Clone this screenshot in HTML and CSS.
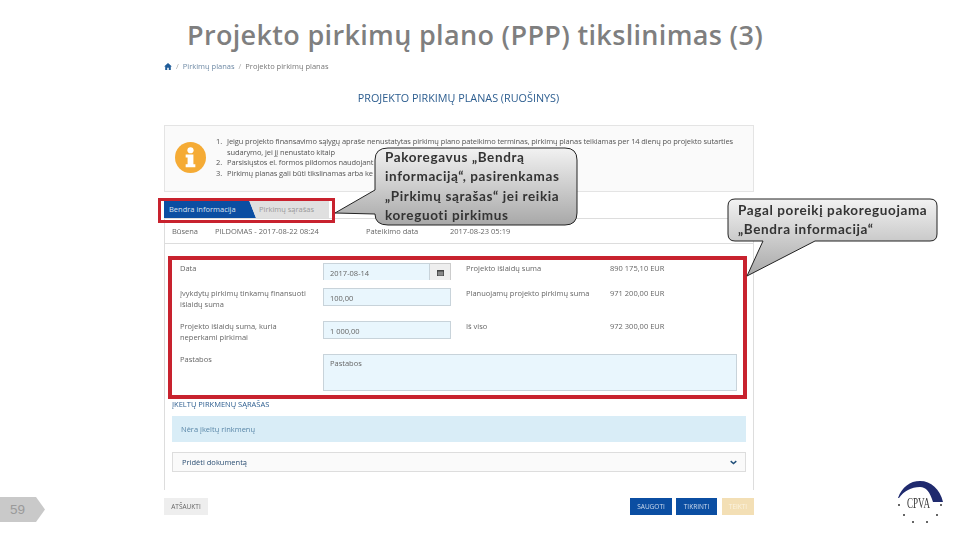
FILE: index.html
```html
<!DOCTYPE html>
<html lang="lt">
<head>
    <meta charset="UTF-8">
    <title>Projekto pirkimų plano tikslinimas</title>
    <link rel="stylesheet" href="styles.css">
</head>
<body>
<div class="slide">
    <h1 class="title">Projekto pirkimų plano (PPP) tikslinimas (3)</h1>

    <div class="shot">
        <div class="crumbs">
            <svg class="home" viewBox="0 0 10 9"><path d="M5 0 L10 4.6 H8.6 V9 H6 V6 H4 V9 H1.4 V4.6 H0 Z"/></svg>
            <span class="sep">/</span><span>Pirkimų planas</span>
            <span class="sep">/</span><span class="muted">Projekto pirkimų planas</span>
        </div>
        <h2 class="heading">PROJEKTO PIRKIMŲ PLANAS (RUOŠINYS)</h2>

        <div class="alert">
            <svg class="alert-icon" viewBox="0 0 32 32">
                <circle cx="16" cy="16" r="16" fill="#f5ab35"/>
                <circle cx="16" cy="8.5" r="3.2" fill="#fff"/>
                <path d="M11 13 H19 V23 H21 V26 H11 V23 H13 V16 H11 Z" fill="#fff"/>
            </svg>
            <ol class="alert-list">
                <li>Jeigu projekto finansavimo sąlygų apraše nenustatytas pirkimų plano pateikimo terminas, pirkimų planas teikiamas per 14 dienų po projekto sutarties sudarymo, jei jį nenustato kitaip</li>
                <li>Parsisiųstos el. formos pildomos naudojant</li>
                <li>Pirkimų planas gali būti tikslinamas arba ke</li>
            </ol>
        </div>

        <div class="tabs">
            <div class="tab tab-active">Bendra informacija</div>
            <div class="tab tab-idle">Pirkimų sąrašas</div>
        </div>

        <div class="panel">
            <div class="status">
                <span class="status-a">Būsena</span>
                <span class="status-b">PILDOMAS - 2017-08-22 08:24</span>
                <span class="status-c">Pateikimo data</span>
                <span>2017-08-23 05:19</span>
            </div>

            <div class="form">
                <div class="form-row row-first">
                    <div class="label">Data</div>
                    <div class="date">
                        <div class="input input-open">2017-08-14</div>
                        <div class="date-btn">
                            <svg class="cal" viewBox="0 0 8 8"><path d="M0 1 H8 V8 H0 Z M1 3 V7 H7 V3 Z"/><path d="M1 3 H7 V7 H1 Z" opacity=".6"/></svg>
                        </div>
                    </div>
                    <div class="label label-right">Projekto išlaidų suma</div>
                    <div class="value">890 175,10 EUR</div>
                </div>
                <div class="form-row">
                    <div class="label">Įvykdytų pirkimų tinkamų finansuoti<br>išlaidų suma</div>
                    <div class="input">100,00</div>
                    <div class="label label-right">Planuojamų projekto pirkimų suma</div>
                    <div class="value">971 200,00 EUR</div>
                </div>
                <div class="form-row">
                    <div class="label">Projekto išlaidų suma, kuria<br>neperkami pirkimai</div>
                    <div class="input">1 000,00</div>
                    <div class="label label-right">Iš viso</div>
                    <div class="value">972 300,00 EUR</div>
                </div>
                <div class="form-row row-notes">
                    <div class="label">Pastabos</div>
                    <div class="input notes">Pastabos</div>
                </div>
            </div>

            <div class="files">
                <h3 class="files-title">ĮKELTŲ PIRKMENŲ SĄRAŠAS</h3>
                <div class="files-info">Nėra įkeltų rinkmenų</div>
                <div class="files-add">
                    <span>Pridėti dokumentą</span>
                    <svg class="chev" viewBox="0 0 10 7"><path d="M1 1.5 L5 5 L9 1.5" fill="none" stroke="#1f4e79" stroke-width="2"/></svg>
                </div>
            </div>
        </div>

        <div class="actions">
            <div class="btn btn-back">ATŠAUKTI</div>
            <div class="actions-right">
                <div class="btn btn-main btn-save">SAUGOTI</div>
                <div class="btn btn-main btn-check">TIKRINTI</div>
                <div class="btn btn-off">TEIKTI</div>
            </div>
        </div>
    </div>

    <div class="mark mark-tabs"></div>
    <div class="mark mark-form"></div>

    <svg class="bubble-art" viewBox="0 0 960 540">
        <defs>
            <linearGradient id="bubbleFill" x1="0" y1="0" x2="0" y2="1">
                <stop offset="0" stop-color="#f2f2f2"/>
                <stop offset="1" stop-color="#a8a8a8"/>
            </linearGradient>
        </defs>
        <path fill="url(#bubbleFill)" stroke="#222" d="M388 148 H565 Q577 148 577 160 V213 Q577 225 565 225 H388 Q375 225 375 214 L335 213 L375 190 V160 Q375 148 388 148 Z"/>
        <path fill="url(#bubbleFill)" stroke="#222" d="M735 199 H930 Q937 199 937 206 V234 Q937 241 930 241 H815 L747 276 L763 241 H735 Q728 241 728 234 V206 Q728 199 735 199 Z"/>
    </svg>

    <div class="bubble bubble-one">Pakoregavus „Bendrą informaciją“, pasirenkamas „Pirkimų sąrašas“ jei reikia koreguoti pirkimus</div>
    <div class="bubble bubble-two">Pagal poreikį pakoreguojama „Bendra informacija“</div>

    <div class="page-tag">59</div>

    <svg class="logo" viewBox="0 0 48 46">
        <path d="M1 18 C5 7 13 1 23 1 C34 1 43 9 46 22 L36 22 C33 12 29 7 23 7 C14 7 7 11 2 18 Z" fill="#1f2a6e"/>
        <text x="10" y="28" textLength="23" lengthAdjust="spacingAndGlyphs" class="logo-text">CPVA</text>
        <circle cx="2" cy="25" r="1" fill="#333"/>
        <circle cx="44" cy="25" r="1" fill="#333"/>
        <circle cx="7" cy="35" r="1" fill="#333"/>
        <circle cx="40" cy="35" r="1" fill="#333"/>
        <circle cx="16" cy="42" r="1" fill="#333"/>
        <circle cx="30" cy="42" r="1" fill="#333"/>
    </svg>
</div>
</body>
</html>
```

FILE: styles.css
```css
* {
    box-sizing: border-box;
}
body {
    margin: 0;
    background-color: white;
    font-family: "Open Sans", sans-serif;
}
.slide {
    position: relative;
    width: 960px;
    height: 540px;
    overflow: hidden;
    background-color: white;
}
.title {
    margin: 0;
    height: 59px;
    padding-top: 16px;
    padding-left: 187px;
    font-size: 27px;
    line-height: 38px;
    font-weight: 600;
    color: #7f7f7f;
    letter-spacing: 0.33px;
    white-space: nowrap;
}

/* the pasted screenshot of the web form */
.shot {
    width: 590px;
    margin-left: 164px;
    font-size: 7.5px;
    color: #666;
    filter: blur(0.4px);
}
.crumbs {
    display: flex;
    align-items: center;
    gap: 4px;
    height: 14px;
    color: #6f8aa5;
}
.crumbs .muted {
    color: #777;
}
.crumbs .sep {
    color: #aaa;
}
.home {
    width: 8px;
    height: 7px;
    fill: #1f5c99;
}
.heading {
    margin: 18px 0 20px 0;
    height: 14px;
    font-size: 10.8px;
    line-height: 14px;
    font-weight: 400;
    text-align: center;
    color: #2c5d8f;
    padding-right: 1px;
}
.alert {
    display: flex;
    height: 67px;
    padding: 10px 10px 0 10px;
    background-color: #fafafa;
    border: 1px solid #e4e4e4;
}
.alert-icon {
    width: 31px;
    height: 31px;
    margin-top: 6px;
    flex-shrink: 0;
}
.alert-list {
    margin: 0;
    padding: 0 0 0 18px;
    line-height: 10.5px;
    letter-spacing: -0.11px;
    color: #555;
}
.alert-list li {
    padding-left: 3px;
}
.tabs {
    display: flex;
    margin-top: 8px;
    height: 18px;
}
.tab {
    line-height: 18px;
    white-space: nowrap;
}
.tab-active {
    width: 92px;
    padding-left: 5px;
    background-color: #0b4ea2;
    color: #d8e4f2;
    clip-path: polygon(0 0, 85px 0, 92px 100%, 0 100%);
}
.tab-idle {
    width: 80px;
    margin-left: -7px;
    padding-left: 10px;
    background-color: #e0e0e0;
    color: #999;
    clip-path: polygon(0 0, 100% 0, 100% 100%, 7px 100%);
}
.panel {
    height: 272px;
    border-left: 1px solid #ddd;
    border-right: 1px solid #ddd;
    border-top: 1px solid #ddd;
}
.status {
    display: flex;
    align-items: center;
    height: 25px;
    padding-left: 7px;
    border-bottom: 1px solid #ddd;
}
.status-a {
    width: 43px;
}
.status-b {
    width: 151px;
}
.status-c {
    width: 84px;
}
.form {
    padding-top: 19px;
}
.form-row {
    display: flex;
    height: 33px;
    padding-left: 15px;
    padding-bottom: 15px;
}
.row-first {
    height: 25px;
    padding-bottom: 8px;
}
.row-notes {
    height: 37px;
    padding-bottom: 0;
}
.label {
    width: 143px;
    line-height: 11px;
    color: #666;
}
.label-right {
    width: 144px;
    margin-left: 15px;
}
.value {
    line-height: 11px;
}
.input {
    width: 128px;
    height: 18px;
    padding-left: 6px;
    line-height: 18px;
    background-color: #e9f6fd;
    border: 1px solid #c8d3da;
}
.date {
    display: flex;
    width: 128px;
    height: 17px;
}
.input-open {
    flex: 1;
    height: 17px;
    border-bottom: none;
}
.date-btn {
    display: flex;
    align-items: center;
    justify-content: center;
    width: 21px;
    background-color: #eee;
    border: 1px solid #ccc;
    border-left: none;
    border-bottom: none;
}
.cal {
    width: 7px;
    height: 7px;
    fill: #444;
}
.notes {
    width: 414px;
    height: 37px;
    line-height: 16px;
}
.files {
    padding: 8px 7px 0 7px;
}
.files-title {
    margin: 0 0 6px 0;
    height: 11px;
    font-size: 7.5px;
    line-height: 11px;
    font-weight: 400;
    color: #2c5d8f;
}
.files-info {
    height: 26px;
    padding-left: 9px;
    line-height: 26px;
    background-color: #d9edf7;
    color: #5a87a8;
}
.files-add {
    display: flex;
    align-items: center;
    justify-content: space-between;
    height: 20px;
    margin-top: 10px;
    padding: 0 8px 0 9px;
    background-color: #fafafa;
    border: 1px solid #ddd;
    color: #2c4f73;
}
.chev {
    width: 7px;
    height: 5px;
}
.actions {
    display: flex;
    justify-content: space-between;
    margin-top: 8px;
}
.actions-right {
    display: flex;
    gap: 4px;
}
.btn {
    height: 17px;
    line-height: 17px;
    font-size: 6.5px;
    text-align: center;
}
.btn-back {
    width: 44px;
    background-color: #eee;
    color: #666;
}
.btn-main {
    background-color: #0b4ea2;
    color: #cfdcee;
}
.btn-save {
    width: 42px;
}
.btn-check {
    width: 41px;
}
.btn-off {
    width: 32px;
    margin-left: 1px;
    background-color: #f3dfb5;
    color: #fbf3e0;
}

/* red frames and callouts drawn over the screenshot */
.mark {
    position: absolute;
    border: 3px solid #c8222e;
}
.mark-tabs {
    left: 158px;
    top: 198px;
    width: 177px;
    height: 25px;
}
.mark-form {
    left: 168px;
    top: 256px;
    width: 579px;
    height: 143px;
    border-width: 4px;
}
.bubble-art {
    position: absolute;
    left: 0;
    top: 0;
    width: 960px;
    height: 540px;
}
.bubble {
    position: absolute;
    font-family: Lato, sans-serif;
    font-weight: 700;
    color: #333;
    font-size: 13.5px;
    letter-spacing: 0.62px;
}
.bubble-one {
    left: 385px;
    top: 148px;
    width: 186px;
    line-height: 19.4px;
}
.bubble-two {
    left: 738px;
    top: 201px;
    width: 196px;
    line-height: 19px;
}
.page-tag {
    position: absolute;
    left: 0;
    top: 497px;
    width: 45px;
    height: 25px;
    padding-left: 10px;
    font-family: "Liberation Sans", sans-serif;
    font-size: 13.5px;
    line-height: 26px;
    color: #9a9a9a;
    background-color: #c9c9c9;
    clip-path: polygon(0 0, 36px 0, 100% 50%, 36px 100%, 0 100%);
}
.logo {
    position: absolute;
    left: 897px;
    top: 480px;
    width: 48px;
    height: 46px;
}
.logo-text {
    font-family: "Liberation Serif", serif;
    font-size: 14px;
    fill: #3a3a3a;
}
```
